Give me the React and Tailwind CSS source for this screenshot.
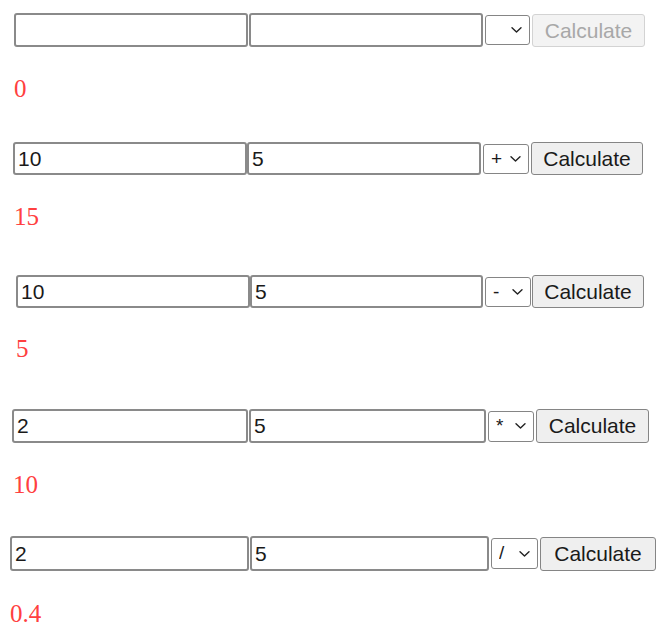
import React from 'react';

const rows = [
  {
    a: '', b: '', op: '', result: '0', disabled: true,
    row: 'ml-[14px] mt-[13px]',
    res: 'ml-[14px] mt-[29px]',
    inA: 'w-[234px] h-[34px]', inB: 'w-[234px] h-[34px] ml-[1px]',
    sel: 'w-[45px] h-[30px] ml-[2px]', btn: 'w-[113px] h-[33px] ml-[2px]',
  },
  {
    a: '10', b: '5', op: '+', result: '15',
    row: 'ml-[13px] mt-[41px]',
    res: 'ml-[14px] mt-[29px]',
    inA: 'w-[234px] h-[33px]', inB: 'w-[234px] h-[33px] ml-[0px]',
    sel: 'w-[46px] h-[30px] ml-[2px]', btn: 'w-[112px] h-[33px] ml-[2px]',
  },
  {
    a: '10', b: '5', op: '-', result: '5',
    row: 'ml-[16px] mt-[46px]',
    res: 'ml-[16px] mt-[28px]',
    inA: 'w-[234px] h-[33px]', inB: 'w-[233px] h-[33px] ml-[0px]',
    sel: 'w-[46px] h-[30px] ml-[2px]', btn: 'w-[112px] h-[33px] ml-[1px]',
  },
  {
    a: '2', b: '5', op: '*', result: '10',
    row: 'ml-[12px] mt-[48px]',
    res: 'ml-[13px] mt-[29px]',
    inA: 'w-[236px] h-[34px]', inB: 'w-[237px] h-[34px] ml-[1px]',
    sel: 'w-[46px] h-[31px] ml-[2px]', btn: 'w-[113px] h-[34px] ml-[2px]',
  },
  {
    a: '2', b: '5', op: '/', result: '0.4',
    row: 'ml-[10px] mt-[39px]',
    res: 'ml-[10px] mt-[30px]',
    inA: 'w-[239px] h-[35px]', inB: 'w-[239px] h-[35px] ml-[1px]',
    sel: 'w-[47px] h-[31px] ml-[2px]', btn: 'w-[116px] h-[34px] ml-[2px]',
  },
];

const Chevron = () => (
  <svg
    className="pointer-events-none absolute right-[8px] top-1/2 -translate-y-1/2 w-[11px] h-[7px]"
    viewBox="0 0 11 7"
    fill="none">
    <path d="M1 1.2l4.5 4.3L10 1.2" stroke="#222" strokeWidth="1.4" strokeLinecap="round" strokeLinejoin="round" />
  </svg>
);

const Calc = ({ r }) => {
  return (
    <div>
      <div className={`flex items-center ${r.row}`}>
        <input
          type="text"
          defaultValue={r.a}
          className={`${r.inA} border-2 border-[#8a8a8a] rounded-[3px] bg-white px-[3px] text-[21px] text-[#1a1a1a] outline-none`}
        />
        <input
          type="text"
          defaultValue={r.b}
          className={`${r.inB} border-2 border-[#8a8a8a] rounded-[3px] bg-white px-[3px] text-[21px] text-[#1a1a1a] outline-none`}
        />
        <div className={`relative ${r.sel}`}>
          <select
            defaultValue={r.op}
            className="appearance-none w-full h-full border border-[#858585] rounded-[3px] bg-white text-[19px] text-[#1a1a1a] pl-[7px] outline-none"
          >
            <option value=""></option>
            <option value="+">+</option>
            <option value="-">-</option>
            <option value="*">*</option>
            <option value="/">/</option>
          </select>
          <Chevron />
        </div>
        <button
          type="button"
          disabled={r.disabled}
          className={
            r.disabled
              ? `${r.btn} border border-[#d3d3d3] rounded-[3px] bg-[#f3f3f3] text-[21px] text-[#a8a8a8]`
              : `${r.btn} border border-[#858585] rounded-[3px] bg-[#efefef] text-[21px] text-[#1a1a1a]`
          }
        >
          Calculate
        </button>
      </div>
      <p className={`${r.res} text-[25px] leading-none text-[#ff4040]`} style={{ fontFamily: '"Liberation Serif", serif' }}>
        {r.result}
      </p>
    </div>
  );
};

export default function App() {
  return (
    <div className="w-[660px] h-[634px] bg-white overflow-hidden" style={{ fontFamily: '"Liberation Sans", Arial, sans-serif' }}>
      {rows.map((r, i) => (
        <Calc key={i} r={r} />
      ))}
    </div>
  );
}
